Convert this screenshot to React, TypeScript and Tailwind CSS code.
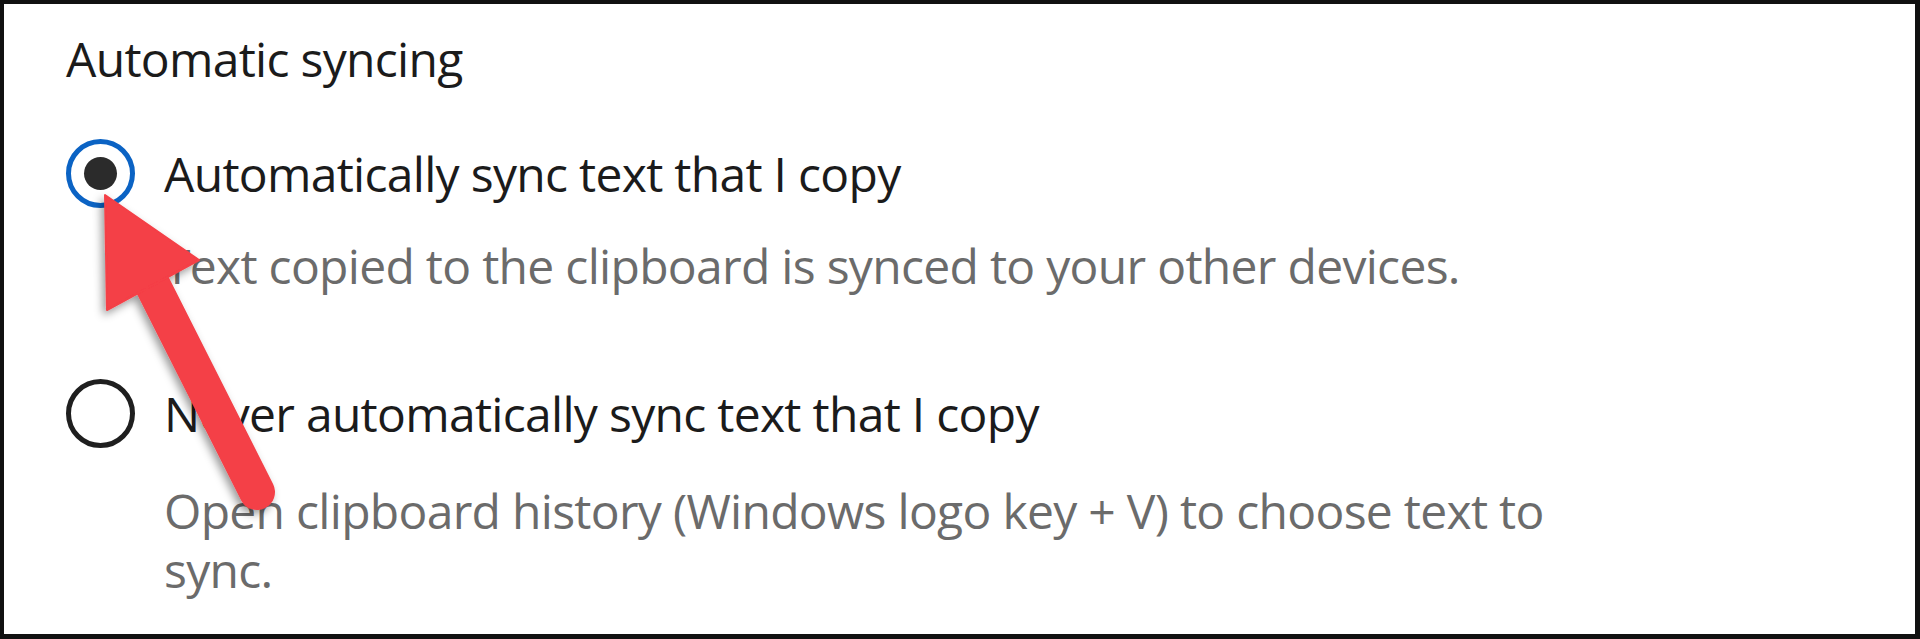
import React from "react";

interface OptionProps {
  label: string;
  description: React.ReactNode;
  selected?: boolean;
  rowClass: string;
  descClass: string;
}

const RadioDot = ({ selected }: { selected?: boolean }) =>
  selected ? (
    <span className="flex h-[69px] w-[69px] shrink-0 items-center justify-center rounded-full border-[5px] border-[#0b63c4] bg-white">
      <span className="h-[33px] w-[33px] rounded-full bg-[#2b2b2b]" />
    </span>
  ) : (
    <span className="h-[69px] w-[69px] shrink-0 rounded-full border-[5px] border-[#1f1f1f] bg-white" />
  );

const SyncOption = ({ label, description, selected, rowClass, descClass }: OptionProps) => (
  <div>
    <label className={`flex items-center gap-[29px] ${rowClass}`}>
      <RadioDot selected={selected} />
      <span className="text-[#1b1b1b]">{label}</span>
    </label>
    <p className={`ml-[98px] max-w-[1460px] text-[#6b6b6b] ${descClass}`}>{description}</p>
  </div>
);

export default function App() {
  return (
    <div className="relative h-[639px] w-[1920px] overflow-hidden border-4 border-r-[5px] border-b-[5px] border-[#111111] bg-white pl-[62px] pt-[25px] font-['Open_Sans',sans-serif] text-[48px] leading-[59px] tracking-[-0.7px]">
      <h2 className="text-[#1b1b1b]">Automatic syncing</h2>

      <SyncOption
        selected
        rowClass="mt-[51px]"
        descClass="mt-[28px]"
        label="Automatically sync text that I copy"
        description="Text copied to the clipboard is synced to your other devices."
      />

      <SyncOption
        rowClass="mt-[84px]"
        descClass="mt-[33px]"
        label="Never automatically sync text that I copy"
        description="Open clipboard history (Windows logo key + V) to choose text to sync."
      />

      {/* callout arrow pointing at the selected radio */}
      <svg
        className="pointer-events-none absolute -left-1 -top-1 h-[639px] w-[1920px]"
        viewBox="0 0 1920 639"
      >
        <defs>
          <filter id="arrowShadow" x="-50%" y="-50%" width="200%" height="200%">
            <feDropShadow dx="-3" dy="4" stdDeviation="4" floodColor="#000" floodOpacity="0.4" />
          </filter>
        </defs>
        <g filter="url(#arrowShadow)" fill="#f43f46" stroke="#f43f46">
          <line x1="150" y1="280" x2="257" y2="492" strokeWidth="36" strokeLinecap="round" />
          <polygon points="105,195 107,310 199,260" strokeWidth="2" strokeLinejoin="round" />
        </g>
      </svg>
    </div>
  );
}
